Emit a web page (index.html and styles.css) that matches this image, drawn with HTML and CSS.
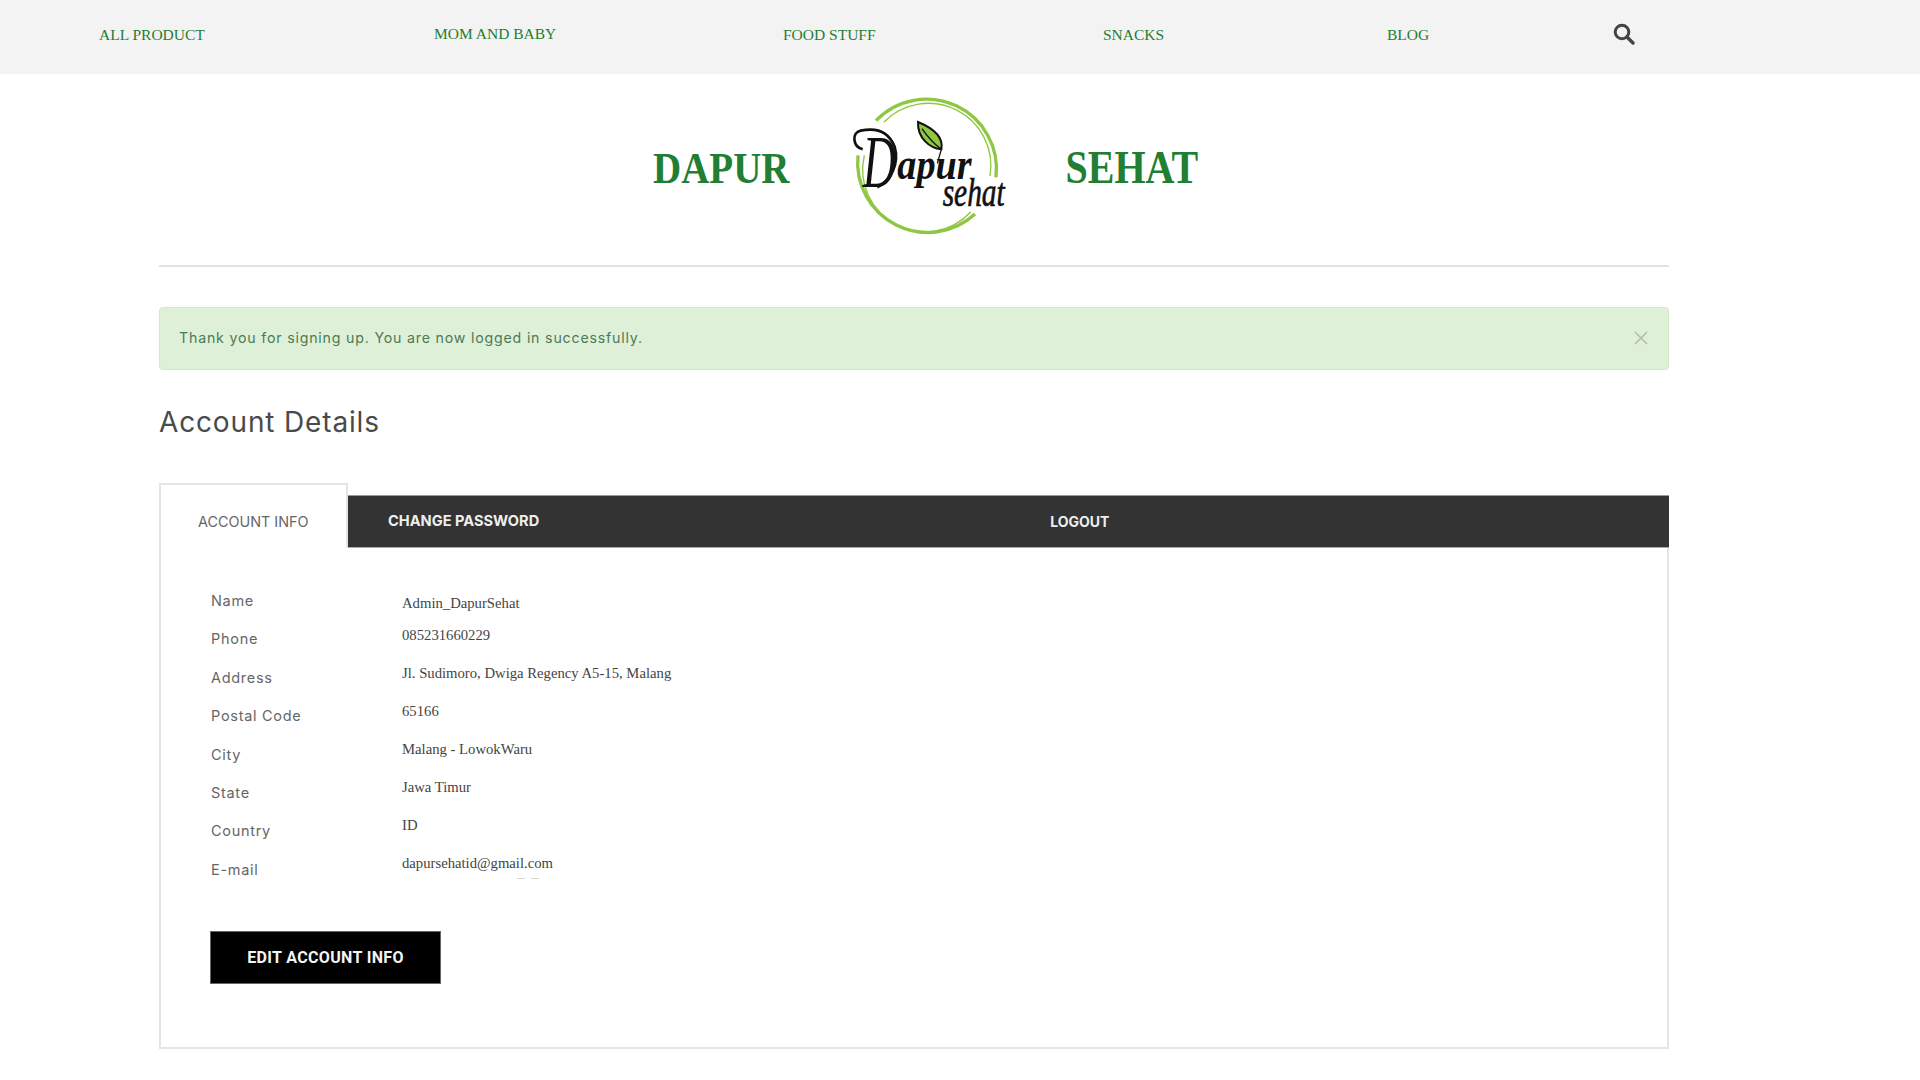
FILE: index.html
```html
<!DOCTYPE html>
<html lang="en">
<head>
    <meta charset="UTF-8" />
    <meta name="viewport" content="width=device-width, initial-scale=1.0" />
    <title>Account Details - Dapur Sehat</title>
    <link rel="stylesheet" href="styles.css">
</head>
<body>
    <nav class="topnav">
        <a href="#" class="nav-link">ALL PRODUCT</a>
        <a href="#" class="nav-link nav-link-up">MOM AND BABY</a>
        <a href="#" class="nav-link">FOOD STUFF</a>
        <a href="#" class="nav-link">SNACKS</a>
        <a href="#" class="nav-link">BLOG</a>
        <a href="#" class="nav-search" aria-label="Search">
            <svg width="22" height="22" viewBox="0 0 22 22">
                <circle cx="9" cy="9" r="6.8" fill="none" stroke="#444" stroke-width="3" />
                <line x1="14" y1="14" x2="20" y2="20" stroke="#444" stroke-width="3.4" stroke-linecap="round" />
            </svg>
        </a>
    </nav>

    <div class="wrapper">
        <header class="brand">
            <span class="brand-word brand-left">DAPUR</span>
            <svg class="logo" width="200" height="170" viewBox="0 0 600 510">
                <g fill="none" stroke="#8fc742" stroke-linecap="butt">
                    <path d="M168 122 A210 210 0 0 1 528 292" stroke-width="10" />
                    <path d="M192 126 A187 187 0 0 1 510 288" stroke-width="4" />
                    <path d="M465 402 A210 210 0 0 1 114 226" stroke-width="10" />
                    <path d="M452 396 A187 187 0 0 1 133 226" stroke-width="4" />
                </g>
                <path d="M294 126 C340 145 372 170 364 208 C330 205 292 175 294 126 Z" fill="#8fc742" stroke="#111" stroke-width="6" />
                <path d="M306 146 C322 170 340 190 364 208 L352 250" fill="none" stroke="#111" stroke-width="4" />
                <path d="M128 208 C98 200 94 158 122 152 C150 146 200 140 224 200 C238 250 215 300 172 322" fill="none" stroke="#111" stroke-width="8" />
                <text class="logo-big" transform="translate(128 322) scale(.63 1)">D</text>
                <text class="logo-mid" transform="translate(232 298) scale(.85 1)">apur</text>
                <text class="logo-small" transform="translate(368 378) scale(.735 1)">sehat</text>
            </svg>
            <span class="brand-word brand-right">SEHAT</span>
        </header>

        <div class="alert">
            <span class="alert-text">Thank you for signing up. You are now logged in successfully.</span>
            <svg class="alert-close" width="14" height="14" viewBox="0 0 14 14">
                <path d="M1 1 L13 13 M13 1 L1 13" stroke="#b4bcb0" stroke-width="1.6" fill="none" />
            </svg>
        </div>

        <h2 class="page-title">Account Details</h2>

        <div class="tabs">
            <a href="#" class="tab tab-active">ACCOUNT INFO</a>
            <div class="tab-bar">
                <a href="#" class="tab tab-dark">CHANGE PASSWORD</a>
                <a href="#" class="tab tab-dark tab-logout">LOGOUT</a>
            </div>
        </div>

        <section class="panel">
            <div class="details">
                <ul class="labels">
                    <li>Name</li>
                    <li>Phone</li>
                    <li>Address</li>
                    <li>Postal Code</li>
                    <li>City</li>
                    <li>State</li>
                    <li>Country</li>
                    <li>E-mail</li>
                </ul>
                <ul class="values">
                    <li>Admin_DapurSehat</li>
                    <li>085231660229</li>
                    <li>Jl. Sudimoro, Dwiga Regency A5-15, Malang</li>
                    <li>65166</li>
                    <li>Malang - LowokWaru</li>
                    <li>Jawa Timur</li>
                    <li>ID</li>
                    <li>dapursehatid@gmail.com</li>
                </ul>
            </div>
            <div class="clip-tail"><span></span><span></span></div>
            <a href="#" class="btn-edit">EDIT ACCOUNT INFO</a>
        </section>
    </div>
</body>
</html>
```

FILE: styles.css
```css
* {
    box-sizing: border-box;
}

body {
    margin: 0;
    background-color: #fff;
    font-family: "Inter", "Liberation Sans", sans-serif;
    color: #555;
}

a {
    text-decoration: none;
}

ul {
    list-style: none;
    margin: 0;
    padding: 0;
}

/* top nav */
.topnav {
    display: grid;
    grid-template-columns: 335px 349px 320px 284px 226px auto;
    align-items: start;
    height: 74px;
    padding: 26px 0 0 99px;
    background-color: #f3f3f3;
}

.nav-link {
    font-family: "Liberation Serif", serif;
    font-size: 15.5px;
    line-height: 18px;
    color: #237d32;
}

.nav-link-up {
    margin-top: -1px;
}

.nav-search {
    display: block;
    margin-top: -3px;
    line-height: 0;
}

.wrapper {
    width: 1510px;
    margin-left: 159px;
}

/* brand */
.brand {
    display: flex;
    align-items: flex-start;
    height: 193px;
    padding-left: 494px;
    border-bottom: 2px solid #e2e2e2;
}

.brand-word {
    margin-top: 69px;
    font-family: "Liberation Serif", serif;
    font-size: 39px;
    line-height: 50px;
    font-weight: bold;
    color: #217e32;
    transform: scaleY(1.14);
}

.brand-left {
    margin-right: 31px;
}

.brand-right {
    margin-left: 45px;
    font-size: 40px;
}

.logo {
    display: block;
    margin-top: 6px;
}

.logo-big,
.logo-mid,
.logo-small {
    font-family: "Liberation Serif", serif;
    font-style: italic;
    fill: #111;
}

.logo-big {
    font-size: 220px;
    font-weight: normal;
}

.logo-mid {
    font-size: 135px;
    font-weight: bold;
}

.logo-small {
    font-size: 120px;
    font-weight: normal;
    stroke: #111;
    stroke-width: 2px;
}

/* alert */
.alert {
    display: flex;
    justify-content: space-between;
    align-items: center;
    height: 63px;
    margin-top: 40px;
    padding: 0 20px 0 19px;
    background-color: #dff0d8;
    border: 1px solid #d6e9c6;
    border-radius: 4px;
    font-size: 14.2px;
    letter-spacing: 0.8px;
    color: #4d7a55;
}

.alert-text {
    margin-top: -2px;
}

.alert-close {
    margin-top: -1px;
}

.page-title {
    margin: 30px 0 39px;
    font-size: 28px;
    line-height: 44px;
    font-weight: 400;
    letter-spacing: 0.85px;
    color: #4a4a4a;
}

/* tabs */
.tabs {
    display: flex;
    align-items: flex-end;
}

.tab {
    font-size: 14.4px;
    line-height: 17px;
}

.tab-active {
    width: 189px;
    height: 65px;
    padding: 28px 0 0 37px;
    background-color: #fff;
    border: 2px solid #e5e5e5;
    border-bottom: 0;
    color: #666;
}

.tab-bar {
    flex: 1;
    display: flex;
    align-items: center;
    height: 53px;
    padding-left: 40px;
    background-color: #333;
    border-top: 1px solid #999;
    border-bottom: 1px solid #aaa;
}

.tab-dark {
    font-size: 14.6px;
    font-weight: 700;
    color: #eee;
}

.tab-logout {
    margin-left: 511px;
    font-size: 14px;
}

/* panel */
.panel {
    height: 501px;
    padding: 34px 0 0 49px;
    border: 2px solid #e5e5e5;
    border-top: 0;
}

.details {
    display: flex;
    height: 296px;
    overflow: hidden;
}

.labels {
    width: 192px;
    padding-left: 1px;
    font-size: 14.5px;
    line-height: 38.4px;
    letter-spacing: 0.7px;
    color: #666;
}

.values {
    padding-top: 5px;
    font-family: "Liberation Serif", serif;
    font-size: 14.7px;
    line-height: 38px;
    color: #444;
}

.values li:first-child {
    height: 29px;
    line-height: 26px;
    padding-top: 3px;
}

.clip-tail {
    display: flex;
    gap: 6px;
    height: 1px;
    padding-left: 307px;
}

.clip-tail span {
    width: 8px;
    height: 1px;
    background-color: #d8d4cc;
}

.btn-edit {
    display: block;
    width: 231px;
    height: 53px;
    margin-top: 52px;
    background-color: #000;
    border: 1px solid #666;
    font-family: "Roboto", sans-serif;
    font-size: 16px;
    line-height: 51px;
    font-weight: 700;
    letter-spacing: 0.35px;
    text-align: center;
    color: #f4f4f4;
}
```
